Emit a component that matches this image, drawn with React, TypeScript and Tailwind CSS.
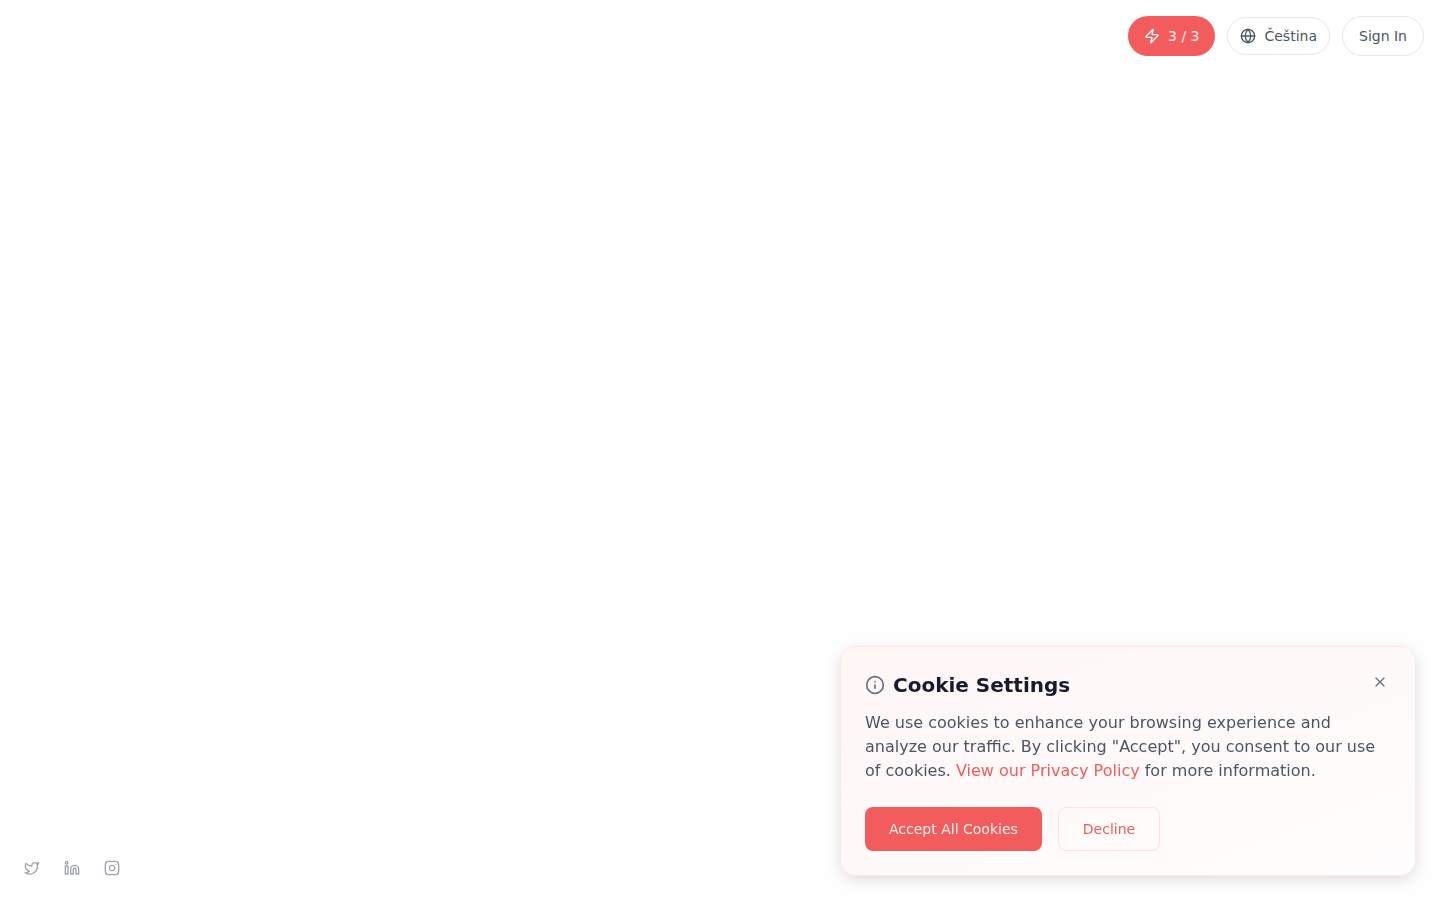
import React from 'react';
import { Zap, Globe, Info, X, Twitter, Linkedin, Instagram } from 'lucide-react';

const CookieBanner: React.FC = () => (
    <div className="fixed right-6 bottom-6 w-[576px] rounded-2xl border border-[#ffe6e6] bg-gradient-to-br from-[#fff6f6] to-[#fffdfd] p-6 shadow-[0_4px_14px_rgba(0,0,0,0.13)]">
        <div className="flex items-start justify-between">
            <div className="flex items-center gap-2">
                <Info className="w-5 h-5 text-[#6b7280]" />
                <h3 className="text-xl leading-7 font-bold text-[#1a1a2e]">Cookie Settings</h3>
            </div>
            <button className="mr-[3px] mt-[3px] text-[#6b7280]">
                <X className="w-4 h-4" />
            </button>
        </div>
        <p className="mt-3 text-base leading-6 text-[#4b5563]">
            We use cookies to enhance your browsing experience and analyze our traffic. By clicking "Accept", you consent to our use of cookies.{' '}
            <a className="text-[#f25c5c]">View our Privacy Policy</a> for more information.
        </p>
        <div className="mt-6 flex items-center gap-4">
            <button className="h-11 px-6 rounded-lg bg-[#f25c5c] text-sm text-white/90">Accept All Cookies</button>
            <button className="h-11 px-6 rounded-lg border border-[#ffdfdf] text-sm text-[#f25c5c]">Decline</button>
        </div>
    </div>
);

const App: React.FC = () => {
    return (
        <div className="min-h-screen flex flex-col justify-between bg-[#fefefe] font-['DejaVu_Sans',sans-serif]">
            <header className="flex items-center justify-end gap-3 pt-4 pr-4">
                <button className="h-10 flex items-center gap-2 px-4 rounded-full bg-[#f25c5c] text-sm text-white/90">
                    <Zap className="w-4 h-4 text-white" />
                    3 / 3
                </button>
                <button className="h-[38px] flex items-center gap-2 px-3 rounded-full border border-[#e5e7eb] bg-white text-sm text-[#4b5563]">
                    <Globe className="w-4 h-4" />
                    Čeština
                </button>
                <button className="h-10 px-4 rounded-full border border-[#e5e7eb] bg-white text-sm text-[#4b5563]">Sign In</button>
            </header>
            <footer className="flex items-center gap-6 pl-6 pb-6 text-[#9ca3af]">
                <Twitter className="w-4 h-4" />
                <Linkedin className="w-4 h-4" />
                <Instagram className="w-4 h-4" />
            </footer>
            <CookieBanner />
        </div>
    );
};

export default App;
